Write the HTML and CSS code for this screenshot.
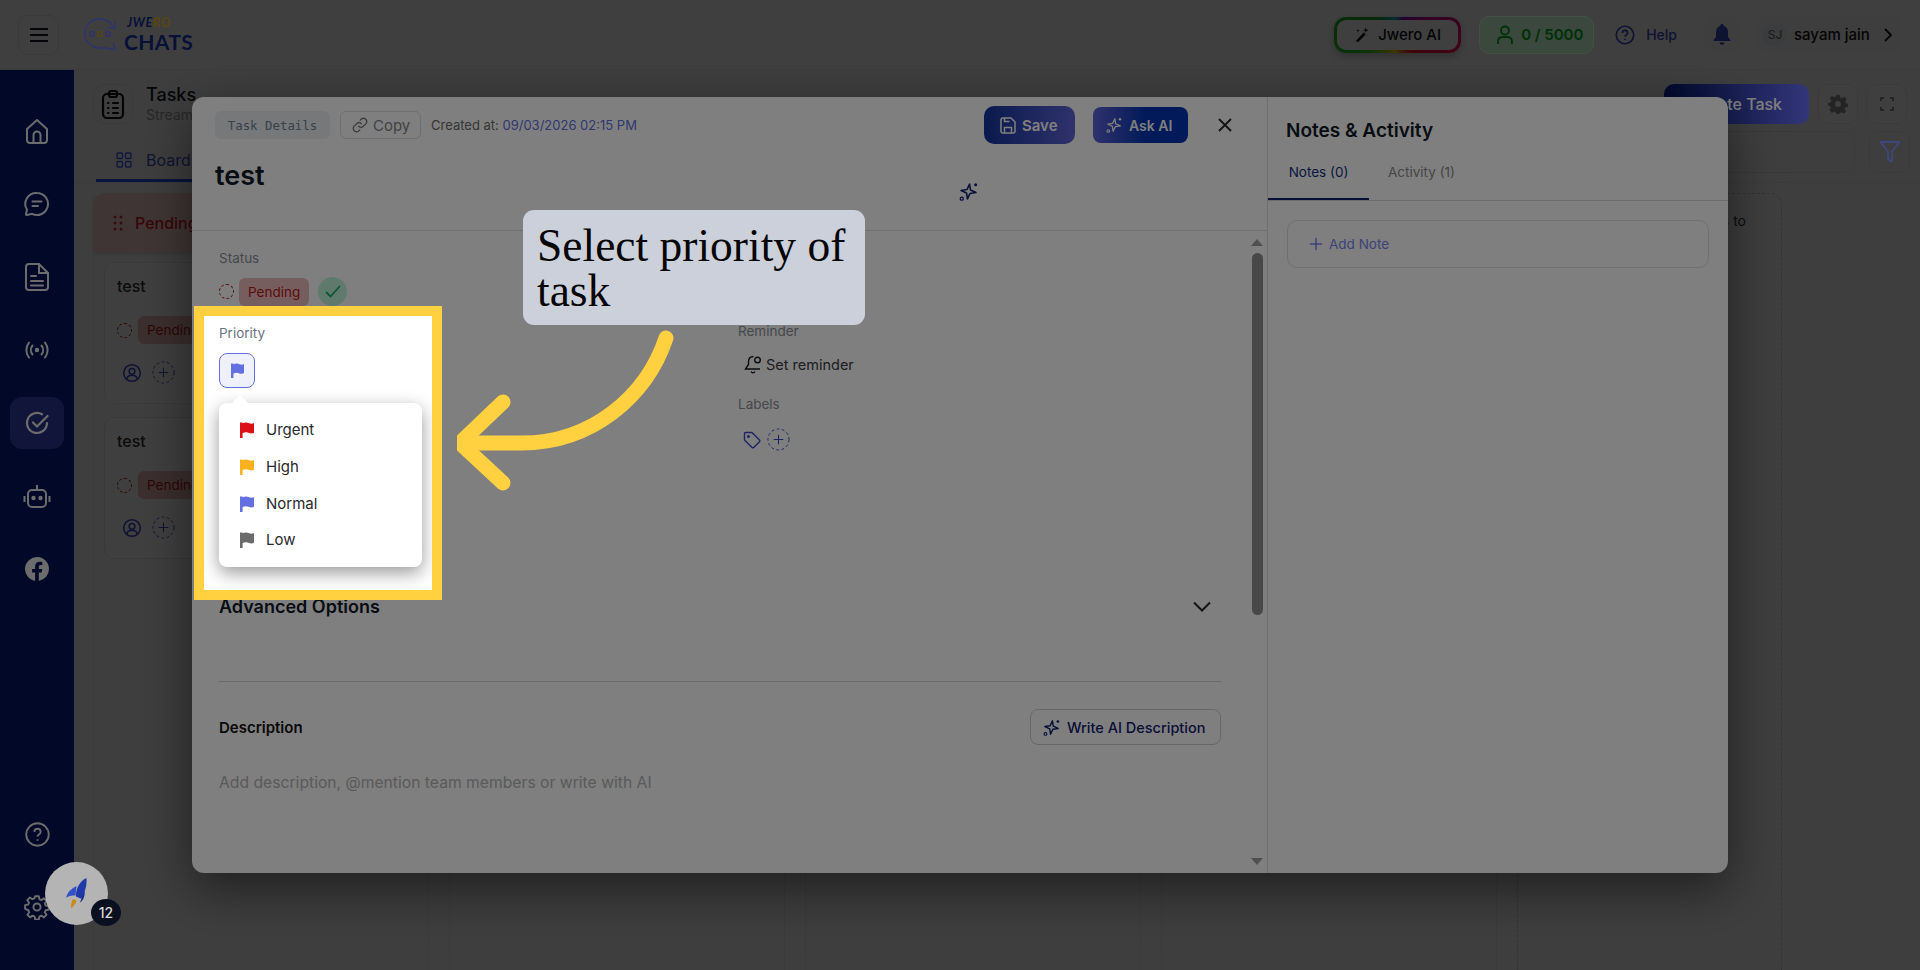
FILE: index.html
```html
<!DOCTYPE html>
<html lang="en">
<head>
    <meta charset="UTF-8">
    <meta name="viewport" content="width=device-width, initial-scale=1.0">
    <title>Jwero Chats - Tasks</title>
    <link rel="stylesheet" href="styles.css">
</head>
<body>
    <svg class="sprite" aria-hidden="true">
        <symbol id="i-flag" viewBox="0 0 14 16"><path fill="currentColor" d="M0 .5h2.600v.8c3-1.300 5-.6 6.500 0 2 .7 3.400.6 4.900-.3v9.800c-1.500.9-2.900 1-4.900.3-1.500-.6-3.500-1.300-6.500 0V16H0z"/></symbol>
        <symbol id="i-sparkle" viewBox="0 0 24 24"><path fill="none" stroke="currentColor" stroke-width="2" stroke-linejoin="round" d="M12 2.500l2.200 7.300 7.300 2.200-7.300 2.200L12 21.500l-2.200-7.300L2.500 12l7.300-2.200z" transform="rotate(8 12 12)"/><circle cx="21" cy="3.500" r="1.900" fill="currentColor"/><circle cx="3.500" cy="21" r="2" fill="none" stroke="currentColor" stroke-width="1.600"/></symbol>
        <symbol id="i-user" viewBox="0 0 24 24"><g fill="none" stroke="currentColor" stroke-width="1.800"><circle cx="12" cy="12" r="10"/><circle cx="12" cy="10" r="3.500"/><path d="M5.500 19c1-3 3.500-4.200 6.500-4.200s5.500 1.200 6.500 4.200"/></g></symbol>
        <symbol id="i-add" viewBox="0 0 24 24"><circle cx="12" cy="12" r="11" fill="none" stroke="currentColor" stroke-width="1" stroke-dasharray="3 2.500"/><path d="M12 7v10M7 12h10" stroke="currentColor" stroke-width="1.100"/></symbol>
    </svg>

    <div class="app">
        <header class="topbar">
            <button class="menu-btn">
                <svg width="20" height="16" viewBox="0 0 20 16"><path d="M1 2h18M1 8h18M1 14h18" stroke="#111827" stroke-width="2"/></svg>
            </button>
            <div class="logo">
                <svg width="36" height="36" viewBox="0 0 36 36" fill="none" stroke="#5a64e0" stroke-width="1.300">
                    <path d="M30 10C27 4 22 2 17 2 8 2 2 8 2 17c0 8 7 14 15 14h6l9 2-2-7"/>
                    <path d="M32 4v7h-7"/>
                    <circle cx="9" cy="17" r="2.400"/>
                    <circle cx="17" cy="17" r="2.400" stroke="#b08a20"/>
                    <circle cx="25" cy="17" r="2.400"/>
                </svg>
                <div class="logo-text">
                    <span class="logo-top">JWE<em>RO</em></span>
                    <span class="logo-main">CHATS</span>
                </div>
            </div>
            <div class="topbar-right">
                <button class="ai-btn">
                    <svg width="17" height="17" viewBox="0 0 24 24"><path d="M4 21L15 9l3 3L7 23z" fill="#111"/><path d="M18 2l1 3 3 1-3 1-1 3-1-3-3-1 3-1zM7 4l.6 2 2 .6-2 .6L7 9l-.6-1.800-2-.6 2-.6z" fill="#111"/></svg>
                    Jwero AI
                </button>
                <div class="credits">
                    <svg width="18" height="20" viewBox="0 0 18 20" fill="none" stroke="#00600f" stroke-width="1.800"><circle cx="9" cy="5.500" r="4"/><path d="M2 19v-2c0-3 2-5 5-5h4c3 0 5 2 5 5v2"/></svg>
                    0 / 5000
                </div>
                <div class="help">
                    <svg width="20" height="20" viewBox="0 0 24 24" fill="none" stroke="#3a4cc8" stroke-width="2"><circle cx="12" cy="12" r="10.500"/><path d="M9 9.500C9 7.500 10.500 6.500 12 6.500s3 1 3 3c0 2.500-3 2.500-3 4.500M12 16.500v1.500"/></svg>
                    Help
                </div>
                <button class="bell-btn">
                    <svg width="18" height="22" viewBox="0 0 18 22"><path fill="#3a4cc8" d="M9 0a1.500 1.500 0 0 1 1.500 1.700C13.500 2.500 15 5 15 8v5l2.500 3v1H.5v-1L3 13V8c0-3 1.500-5.500 4.500-6.300A1.500 1.500 0 0 1 9 0zM6.500 18.500h5a2.500 2.500 0 0 1-5 0z"/></svg>
                </button>
                <div class="user-pill">
                    <span class="avatar">SJ</span>
                    <span class="user-name">sayam jain</span>
                    <svg width="10" height="14" viewBox="0 0 10 14" fill="none" stroke="#111" stroke-width="1.800"><path d="M2 1l6 6-6 6"/></svg>
                </div>
            </div>
        </header>

        <div class="main">
            <nav class="sidebar">
                <a class="side-item"><svg width="24" height="26" viewBox="0 0 24 26" fill="none" stroke="currentColor" stroke-width="2" stroke-linejoin="round"><path d="M2 11l10-9 10 9v11a3 3 0 0 1-3 3H5a3 3 0 0 1-3-3z"/><path d="M8.500 25v-8a3.500 3.500 0 0 1 7 0v8"/></svg></a>
                <a class="side-item"><svg width="26" height="26" viewBox="0 0 26 26" fill="none" stroke="currentColor" stroke-width="2" stroke-linecap="round"><path d="M13 2a11 11 0 1 1-5 20.800L3 24c-1 .2-1.200-.5-1-1.200l1-4A11 11 0 0 1 13 2z"/><path d="M8.500 10.500h9M8.500 15h5.500"/></svg></a>
                <a class="side-item"><svg width="24" height="28" viewBox="0 0 24 28" fill="none" stroke="currentColor" stroke-width="2" stroke-linecap="round"><path d="M14 1H4a3 3 0 0 0-3 3v20a3 3 0 0 0 3 3h16a3 3 0 0 0 3-3V10z"/><path d="M14 1v9h9M6 13h5M6 18h12M6 22.500h12"/></svg></a>
                <a class="side-item"><svg width="24" height="18" viewBox="0 0 24 18" fill="none" stroke="currentColor" stroke-width="2" stroke-linecap="round"><circle cx="12" cy="9" r="1.200" fill="currentColor"/><path d="M7.500 4.500a7 7 0 0 0 0 9M16.500 4.500a7 7 0 0 1 0 9M4 1.500a12 12 0 0 0 0 15M20 1.500a12 12 0 0 1 0 15"/></svg></a>
                <a class="side-item active"><svg width="24" height="24" viewBox="0 0 24 24" fill="none" stroke="currentColor" stroke-width="2.200" stroke-linecap="round"><path d="M22 12a10 10 0 1 1-5-8.700"/><path d="M8 11.500l4 4L22.500 5"/></svg></a>
                <a class="side-item"><svg width="28" height="24" viewBox="0 0 28 24" fill="none" stroke="currentColor" stroke-width="2"><rect x="5" y="6" width="18" height="17" rx="4"/><path d="M14 1v5M1.500 12v6M26.500 12v6"/><circle cx="10.500" cy="14" r="1.200" fill="currentColor"/><circle cx="17.500" cy="14" r="1.200" fill="currentColor"/></svg></a>
                <a class="side-item"><svg width="24" height="24" viewBox="0 0 24 24"><path fill="currentColor" d="M24 12a12 12 0 1 0-13.900 11.900v-8.400H7.100V12h3V9.400c0-3 1.800-4.700 4.500-4.700 1.300 0 2.700.2 2.700.2v3h-1.500c-1.500 0-2 .9-2 1.900V12h3.400l-.5 3.500h-2.900v8.400A12 12 0 0 0 24 12z"/></svg></a>
                <a class="side-item side-bottom"><svg width="25" height="25" viewBox="0 0 24 24" fill="none" stroke="currentColor" stroke-width="1.800"><circle cx="12" cy="12" r="10.800"/><path d="M9 9.500C9 7.500 10.500 6.500 12 6.500s3 1 3 3c0 2.500-3 2.500-3 4.500M12 16.500v1.500"/></svg></a>
                <a class="side-item"><svg width="26" height="26" viewBox="0 0 24 24" fill="none" stroke="currentColor" stroke-width="1.800" stroke-linejoin="round"><circle cx="12" cy="12" r="3.300"/><path d="M10.300 2h3.400l.5 2.800 1.800.8 2.400-1.600 2.400 2.400-1.600 2.400.8 1.800 2.800.5v3.400l-2.800.5-.8 1.800 1.600 2.400-2.400 2.400-2.400-1.600-1.800.8-.5 2.800h-3.400l-.5-2.800-1.800-.8-2.400 1.600-2.400-2.400 1.600-2.400-.8-1.800L1 13.700v-3.400l2.800-.5.8-1.800L3 5.600l2.400-2.400 2.400 1.600 1.800-.8z"/></svg></a>
            </nav>

            <section class="content">
                <div class="page-head">
                    <div class="page-icon">
                        <svg width="24" height="30" viewBox="0 0 24 30" fill="none" stroke="#111" stroke-width="2.200" stroke-linecap="round"><rect x="2" y="5" width="20" height="24" rx="4"/><rect x="8" y="2" width="8" height="6" rx="2"/><path d="M7 14h.5M12 14h5M7 19h.5M12 19h5M7 24h.5M12 24h5"/></svg>
                    </div>
                    <div class="page-title">
                        <div class="title-main">Tasks</div>
                        <div class="title-sub">Stream</div>
                    </div>
                    <div class="head-actions">
                        <button class="create-btn">Create Task</button>
                        <button class="square-btn">
                            <svg width="20" height="20" viewBox="0 0 24 24"><path fill="#909090" d="M10 1h4l.6 3 2.300 1 2.600-1.700 2.800 2.800L20.600 8.700l1 2.300 2.400.6v4l-3 .4-1 2.300 1.700 2.600-2.800 2.800-2.600-1.700-2.300 1-.4 2H10l-.6-3-2.300-1-2.600 1.700L1.700 19l1.700-2.600-1-2.300-2.400-.4v-3l3-.6 1-2.300L1.700 5.100l2.800-2.800 2.600 1.700 2.300-1zM12 8.500a3.500 3.500 0 1 0 0 7 3.500 3.500 0 0 0 0-7z"/></svg>
                        </button>
                        <button class="square-btn">
                            <svg width="14" height="14" viewBox="0 0 14 14" fill="none" stroke="#909090" stroke-width="2"><path d="M1 4V1h3M10 1h3v3M13 10v3h-3M4 13H1v-3"/></svg>
                        </button>
                    </div>
                </div>
                <div class="tabs-row">
                    <div class="board-tab">
                        <svg width="16" height="16" viewBox="0 0 16 16" fill="none" stroke="#1e2c80" stroke-width="1.400"><rect x="1" y="1" width="5.500" height="5.500" rx="1"/><rect x="9.500" y="1" width="5.500" height="5.500" rx="1"/><rect x="1" y="9.500" width="5.500" height="5.500" rx="1"/><rect x="9.500" y="9.500" width="5.500" height="5.500" rx="1"/></svg>
                        Boards
                    </div>
                    <div class="search-box"></div>
                    <button class="filter-btn">
                        <svg width="22" height="24" viewBox="0 0 22 24" fill="none" stroke="#7c8cff" stroke-width="1.800" stroke-linejoin="round"><path d="M1.500 2h19l-7.500 9.500V22l-4-3v-7.500z"/></svg>
                    </button>
                </div>
                <div class="board">
                    <div class="board-col">
                        <div class="col-head">
                            <svg width="10" height="16" viewBox="0 0 10 16" fill="#d23030"><circle cx="2" cy="2" r="1.500"/><circle cx="8" cy="2" r="1.500"/><circle cx="2" cy="8" r="1.500"/><circle cx="8" cy="8" r="1.500"/><circle cx="2" cy="14" r="1.500"/><circle cx="8" cy="14" r="1.500"/></svg>
                            Pending
                        </div>
                        <div class="task-card">
                            <div class="card-title">test</div>
                            <div class="card-status"><span class="dash-circle"></span><span class="pending-chip">Pending</span></div>
                            <div class="card-people">
                                <svg class="ic-blue" width="20" height="20"><use href="#i-user"/></svg>
                                <svg class="ic-blue" width="23" height="23"><use href="#i-add"/></svg>
                            </div>
                        </div>
                        <div class="task-card">
                            <div class="card-title">test</div>
                            <div class="card-status"><span class="dash-circle"></span><span class="pending-chip">Pending</span></div>
                            <div class="card-people">
                                <svg class="ic-blue" width="20" height="20"><use href="#i-user"/></svg>
                                <svg class="ic-blue" width="23" height="23"><use href="#i-add"/></svg>
                            </div>
                        </div>
                    </div>
                    <div class="board-col"></div>
                    <div class="board-col"></div>
                    <div class="board-col"></div>
                    <div class="board-new">Add a new status to</div>
                </div>
            </section>
        </div>
    </div>

    <div class="backdrop"></div>

    <div class="modal">
        <div class="task-pane">
            <div class="pane-head">
                <div class="pane-toolbar">
                    <span class="chip-mono">Task Details</span>
                    <button class="copy-btn">
                        <svg width="16" height="16" viewBox="0 0 24 24" fill="none" stroke="#7c7c7c" stroke-width="2" stroke-linecap="round"><path d="M10 14a5 5 0 0 0 7 0l4-4a5 5 0 0 0-7-7l-1.500 1.500"/><path d="M14 10a5 5 0 0 0-7 0l-4 4a5 5 0 0 0 7 7l1.500-1.500"/></svg>
                        Copy
                    </button>
                    <span class="created">Created at: <b>09/03/2026 02:15 PM</b></span>
                    <button class="save-btn">
                        <svg width="16" height="17" viewBox="0 0 16 17" fill="none" stroke="currentColor" stroke-width="1.500"><path d="M1 3a2 2 0 0 1 2-2h8l4 4v9a2 2 0 0 1-2 2H3a2 2 0 0 1-2-2z"/><path d="M4.500 16v-5.500h7V16M4.500 1v3.500h5"/></svg>
                        Save
                    </button>
                    <button class="ask-btn">
                        <svg width="16" height="16"><use href="#i-sparkle"/></svg>
                        Ask AI
                    </button>
                    <button class="close-btn">
                        <svg width="14" height="14" viewBox="0 0 14 14" stroke="#2b2b2b" stroke-width="2"><path d="M1 1l12 12M13 1L1 13"/></svg>
                    </button>
                </div>
                <div class="title-row">
                    <h1 class="task-title">test</h1>
                    <svg class="ic-navy" width="19" height="19"><use href="#i-sparkle"/></svg>
                </div>
            </div>
            <div class="pane-body">
                <div class="form">
                    <div class="fields">
                        <div class="field-col">
                            <div class="field-label">Status</div>
                            <div class="status-row">
                                <span class="dash-circle"></span>
                                <span class="pending-chip">Pending</span>
                                <span class="check-circle">
                                    <svg width="16" height="13" viewBox="0 0 16 13" fill="none" stroke="#1aa86e" stroke-width="1.800"><path d="M1 7l4.500 4.500L15 1"/></svg>
                                </span>
                            </div>
                        </div>
                        <div class="field-col field-col-right">
                            <div class="field-label">Reminder</div>
                            <div class="reminder-row">
                                <svg width="18" height="20" viewBox="0 0 18 20" fill="none" stroke="#1a1a1a" stroke-width="1.400"><path d="M9.500 2.500C6 2.500 4.500 5 4.500 8v2.500L1.500 15h14.500"/><path d="M7 17.500a2.200 2.200 0 0 0 4 0"/><circle cx="13.500" cy="6" r="2.800"/></svg>
                                Set reminder
                            </div>
                            <div class="field-label labels-label">Labels</div>
                            <div class="labels-row">
                                <svg class="ic-blue" width="18" height="18" viewBox="0 0 18 18" fill="none" stroke="currentColor" stroke-width="1.400" stroke-linejoin="round"><path d="M1.500 2.500a1 1 0 0 1 1-1H9l7.500 7.500a1.200 1.200 0 0 1 0 1.700L10.700 16.500a1.200 1.200 0 0 1-1.700 0L1.500 9z"/><circle cx="5.500" cy="5.500" r=".8" fill="currentColor"/></svg>
                                <svg class="ic-blue" width="23" height="23"><use href="#i-add"/></svg>
                            </div>
                        </div>
                    </div>
                    <div class="advanced-row">
                        <span>Advanced Options</span>
                        <svg width="18" height="11" viewBox="0 0 18 11" fill="none" stroke="#2b2b2b" stroke-width="2"><path d="M1 1.500l8 8 8-8"/></svg>
                    </div>
                    <div class="form-divider"></div>
                    <div class="desc-row">
                        <span class="desc-label">Description</span>
                        <button class="write-btn">
                            <svg width="17" height="17"><use href="#i-sparkle"/></svg>
                            Write AI Description
                        </button>
                    </div>
                    <div class="desc-placeholder">Add description, @mention team members or write with AI</div>
                </div>
                <div class="scrollbar">
                    <span class="scroll-up"></span>
                    <span class="scroll-thumb"></span>
                    <span class="scroll-down"></span>
                </div>
            </div>
        </div>
        <aside class="notes-pane">
            <h2 class="notes-title">Notes &amp; Activity</h2>
            <div class="notes-tabs">
                <span class="notes-tab active">Notes (0)</span>
                <span class="notes-tab">Activity (1)</span>
            </div>
            <div class="add-note">
                <svg width="14" height="14" viewBox="0 0 14 14" stroke="#7886ee" stroke-width="1.500"><path d="M7 1v12M1 7h12"/></svg>
                Add Note
            </div>
        </aside>
    </div>

    <div class="tour-dim"></div>

    <div class="tour-frame">
        <div class="field-label priority-label">Priority</div>
        <button class="priority-btn">
            <svg width="13" height="15"><use href="#i-flag"/></svg>
        </button>
        <div class="priority-menu">
            <div class="priority-item"><svg class="flag-red" width="14" height="16"><use href="#i-flag"/></svg>Urgent</div>
            <div class="priority-item"><svg class="flag-amber" width="14" height="16"><use href="#i-flag"/></svg>High</div>
            <div class="priority-item"><svg class="flag-blue" width="14" height="16"><use href="#i-flag"/></svg>Normal</div>
            <div class="priority-item"><svg class="flag-grey" width="14" height="16"><use href="#i-flag"/></svg>Low</div>
        </div>
    </div>

    <div class="tour-callout">Select priority of task</div>

    <svg class="tour-arrow" width="240" height="180" viewBox="0 0 240 180" fill="none" stroke="#ffd040" stroke-width="15" stroke-linecap="round" stroke-linejoin="round">
        <path d="M209 18C190 75 135 125 60 123H12"/>
        <path d="M46 82L3 123l43 40"/>
    </svg>

    <div class="launcher">
        <svg width="21" height="31" viewBox="0 0 20 30">
            <path fill="#c98a16" d="M6 21c1.500-.5 3.500 0 4 1-.5 3-3 5-5 7.500-.5-3 0-6 1-8.500z"/>
            <path fill="#3450c8" d="M10 8C5 10 1 14 0 19c3-2 6-2.500 9-2z"/>
            <path fill="#14288a" d="M15 15c.5 3 0 6-2 9 3-2 5-5 5-11z"/>
            <path fill="#1d3aa8" d="M19.500 0c1 6-1 14-5 20l-5-2C9 11 13 3 19.500 0z"/>
        </svg>
        <span class="launcher-badge">12</span>
    </div>
</body>
</html>
```

FILE: styles.css
```css
* {
    margin: 0;
    padding: 0;
    box-sizing: border-box;
}

body {
    position: relative;
    height: 100vh;
    font-family: Inter, "Liberation Sans", sans-serif;
    background: #fff;
    color: #111827;
    overflow: hidden;
}

button {
    font-family: inherit;
    border: none;
    background: none;
}

.sprite {
    position: absolute;
    width: 0;
    height: 0;
}

.ic-blue { color: #3a46c8; }
.ic-navy { color: #12206e; }

.app {
    display: flex;
    flex-direction: column;
    height: 100%;
}

/* top bar */
.topbar {
    display: flex;
    align-items: center;
    height: 70px;
    padding: 0 18px;
    background: #fff;
    border-bottom: 1px solid #f0f0f0;
}

.menu-btn {
    display: flex;
    align-items: center;
    justify-content: center;
    width: 41px;
    height: 40px;
    border: 1px solid #e8e8e8;
    border-radius: 10px;
}

.logo {
    position: relative;
    z-index: 5;
    display: flex;
    align-items: center;
    gap: 5px;
    margin-left: 24px;
}

.logo-text {
    display: flex;
    flex-direction: column;
    font-family: Lato, sans-serif;
    line-height: 1;
    color: #0f2270;
}

.logo-top {
    margin-left: 3px;
    font-size: 12.5px;
    font-weight: 700;
    font-style: italic;
    letter-spacing: .6px;
}

.logo-top em { color: #b08a20; }

.logo-main {
    margin-top: 1px;
    font-size: 21px;
    font-weight: 700;
    letter-spacing: .4px;
}

.topbar-right {
    display: flex;
    align-items: center;
    margin-left: auto;
}

.ai-btn {
    display: flex;
    align-items: center;
    gap: 8px;
    width: 127px;
    height: 36px;
    padding-left: 16px;
    border: 3px solid transparent;
    border-radius: 12px;
    background: linear-gradient(#fff, #fff) padding-box,
        conic-gradient(from 20deg, #7a0bd0, #ff0a6c 70deg, #ff1a1a 120deg, #ffe000 170deg, #1fd000 230deg, #1fa030 290deg, #00c0c0 330deg, #7a0bd0) border-box;
    box-shadow: 0 3px 8px rgba(0, 0, 0, .25);
    font-size: 15px;
    font-weight: 500;
    color: #111;
}

.credits {
    position: relative;
    z-index: 5;
    display: flex;
    align-items: center;
    gap: 7px;
    width: 115px;
    height: 38px;
    margin-left: 18px;
    padding-left: 16px;
    border: 1px solid #86a08a;
    border-radius: 10px;
    background: #74907a;
    font-size: 15px;
    font-weight: 600;
    color: #00600f;
}

.help {
    display: flex;
    align-items: center;
    gap: 11px;
    margin-left: 21px;
    font-size: 14px;
    font-weight: 500;
    color: #3a4cc8;
}

.bell-btn {
    display: flex;
    align-items: center;
    justify-content: center;
    width: 34px;
    height: 38px;
    margin-left: 28px;
    border-radius: 10px;
    background: #f8f8f8;
}

.user-pill {
    display: flex;
    align-items: center;
    width: 145px;
    height: 38px;
    margin-left: 18px;
    padding-left: 6px;
    border-radius: 12px;
    background: #f8f8f8;
}

.avatar {
    display: flex;
    align-items: center;
    justify-content: center;
    width: 24px;
    height: 24px;
    border-radius: 50%;
    background: #eef0f6;
    font-size: 12px;
    color: #666;
}

.user-name {
    margin-left: 7px;
    font-size: 15px;
    font-weight: 500;
    color: #111;
}

.user-pill svg { margin-left: 13px; }

/* sidebar, sits above the modal backdrop */
.main {
    display: flex;
    flex: 1;
    min-height: 0;
}

.sidebar {
    position: relative;
    z-index: 5;
    display: flex;
    flex-direction: column;
    align-items: center;
    gap: 21px;
    width: 74px;
    padding: 35px 0 37px;
    background: #021050;
}

.side-item {
    display: flex;
    align-items: center;
    justify-content: center;
    width: 54px;
    height: 52px;
    border-radius: 12px;
    color: #d8d8d8;
}

.side-item.active { background: #252b74; }
.side-bottom { margin-top: auto; }

/* tasks page behind the modal */
.content {
    flex: 1;
    min-width: 0;
    display: flex;
    flex-direction: column;
    background: #fafafa;
}

.page-head {
    display: flex;
    align-items: center;
    padding: 14px 13px 0 19px;
}

.page-icon {
    display: flex;
    align-items: center;
    justify-content: center;
    width: 40px;
    height: 40px;
    border: 1px solid #e8e8e8;
    border-radius: 10px;
}

.page-title {
    margin-top: -1px;
    margin-left: 13px;
}

.title-main {
    font-size: 18px;
    font-weight: 500;
    line-height: 22px;
}

.title-sub {
    font-size: 14px;
    line-height: 18px;
    color: #a0a0a0;
}

.head-actions {
    display: flex;
    gap: 9px;
    margin-left: auto;
}

.create-btn {
    position: relative;
    z-index: 5;
    width: 145px;
    height: 40px;
    border-radius: 10px;
    background: linear-gradient(90deg, #00145a, #666cf4);
    font-size: 16px;
    font-weight: 500;
    color: #fff;
}

.square-btn {
    display: flex;
    align-items: center;
    justify-content: center;
    width: 40px;
    height: 40px;
    border: 1px solid #e8e8e8;
    border-radius: 10px;
    background: #fff;
}

.tabs-row {
    display: flex;
    align-items: flex-end;
    height: 59px;
    padding-right: 10px;
    border-bottom: 1px solid #ececec;
}

.board-tab {
    position: relative;
    z-index: 5;
    display: flex;
    align-items: center;
    gap: 14px;
    width: 240px;
    height: 43px;
    margin-left: 22px;
    padding: 2px 20px 0;
    border-bottom: 3px solid #14287c;
    font-size: 16px;
    color: #1e2864;
}

.search-box {
    width: 400px;
    height: 42px;
    margin: 0 14px 9px auto;
    border: 1px solid #e8e8e8;
    border-radius: 10px;
}

.filter-btn {
    display: flex;
    align-items: center;
    justify-content: center;
    width: 41px;
    height: 42px;
    margin-bottom: 9px;
    border: 1px solid #e8e8e8;
    border-radius: 10px;
}

.filter-btn svg {
    position: relative;
    z-index: 5;
}

.board {
    display: flex;
    flex: 1;
    gap: 20px;
    padding: 10px 0 0 19px;
}

.board-col {
    flex: 0 0 336px;
    border-left: 1px solid #ececec;
    border-right: 1px solid #ececec;
}

.col-head {
    display: flex;
    align-items: center;
    gap: 12px;
    height: 59px;
    padding-left: 19px;
    border-radius: 10px 10px 0 0;
    background: #ffd6d6;
    box-shadow: 0 2px 4px rgba(0, 0, 0, .15);
    font-size: 16px;
    font-weight: 500;
    color: #e01b1b;
}

.task-card {
    width: 315px;
    height: 142px;
    margin: 10px 0 13px 10px;
    padding: 13px 12px;
    border: 1px solid #e8e8e8;
    border-radius: 10px;
    background: #fff;
}

.card-title {
    font-size: 16px;
    font-weight: 500;
    color: #333;
}

.card-status {
    display: flex;
    align-items: center;
    gap: 6px;
    margin-top: 20px;
}

.card-people {
    display: flex;
    align-items: center;
    gap: 10px;
    margin-top: 17px;
    padding-left: 5px;
}

.board-new {
    flex: 0 0 265px;
    padding: 18px 35px 0 0;
    border: 1px dashed #cfcfcf;
    border-bottom: 0;
    border-radius: 10px 10px 0 0;
    font-size: 14px;
    line-height: 18px;
    color: #333;
    text-align: right;
    white-space: nowrap;
}

/* layers */
.backdrop {
    position: absolute;
    inset: 0;
    z-index: 3;
    background: rgba(0, 0, 0, .5);
}

.tour-dim {
    position: absolute;
    inset: 0;
    z-index: 30;
    background: rgba(0, 0, 0, .5);
}

/* modal */
.modal {
    position: absolute;
    top: 97px;
    left: 192px;
    z-index: 10;
    display: flex;
    width: 1536px;
    height: 776px;
    border-radius: 12px;
    background: #fff;
    box-shadow: 0 16px 50px rgba(0, 0, 0, .5);
}

.task-pane {
    display: flex;
    flex-direction: column;
    width: 1076px;
    border-right: 1px solid #dedede;
}

.pane-head {
    height: 134px;
    padding: 9px 0 0 23px;
    border-bottom: 1px solid #dedede;
}

.pane-toolbar {
    display: flex;
    align-items: center;
    height: 38px;
}

.chip-mono {
    display: flex;
    align-items: center;
    justify-content: center;
    width: 115px;
    height: 28px;
    border-radius: 6px;
    background: #eef1f4;
    font-family: "DejaVu Sans Mono", monospace;
    font-size: 12.4px;
    color: #6f8396;
}

.copy-btn {
    display: flex;
    align-items: center;
    gap: 5px;
    width: 81px;
    height: 28px;
    margin-left: 10px;
    padding-left: 11px;
    border: 1px solid #dcdcdc;
    border-radius: 6px;
    font-size: 15px;
    color: #858585;
}

.created {
    margin-left: 10px;
    font-size: 13px;
    color: #6c6c6c;
}

.created b {
    font-weight: 400;
    color: #6070e0;
}

.save-btn {
    display: flex;
    align-items: center;
    gap: 6px;
    width: 91px;
    height: 38px;
    margin-left: auto;
    padding-left: 16px;
    border-radius: 10px;
    background: linear-gradient(90deg, #14349a, #6064d8);
    font-size: 15px;
    font-weight: 600;
    color: #fff;
}

.ask-btn {
    display: flex;
    align-items: center;
    gap: 7px;
    width: 95px;
    height: 36px;
    margin-left: 18px;
    padding-left: 13px;
    border-radius: 8px;
    background: linear-gradient(90deg, #6064d8, #0434b4 55%);
    font-size: 14px;
    font-weight: 600;
    color: #fff;
}

.close-btn {
    display: flex;
    align-items: center;
    justify-content: center;
    width: 14px;
    height: 14px;
    margin: 0 35px 0 30px;
}

.title-row {
    display: flex;
    align-items: flex-start;
    margin-top: 12px;
}

.task-title {
    width: 744px;
    font-size: 27px;
    font-weight: 600;
    line-height: 40px;
    color: #111827;
}

.title-row svg { margin-top: 26px; }

.pane-body {
    display: flex;
    flex: 1;
    min-height: 0;
}

.form {
    flex: 1;
    min-width: 0;
    padding: 0 29px 0 27px;
}

.fields {
    display: flex;
    height: 360px;
}

.field-col {
    flex: 0 0 519px;
    padding-top: 19px;
}

.field-col-right {
    flex: 1;
    padding-top: 92px;
}

.field-label {
    font-size: 13.5px;
    line-height: 16px;
    color: #8b8f9a;
}

.status-row {
    display: flex;
    align-items: center;
    height: 29px;
    margin-top: 11px;
}

.dash-circle {
    width: 15px;
    height: 15px;
    border: 1.5px dashed #b81414;
    border-radius: 50%;
}

.pending-chip {
    display: flex;
    align-items: center;
    height: 28px;
    padding: 0 9px;
    border-radius: 6px;
    background: #efbcbc;
    font-size: 13.5px;
    color: #b81414;
}

.status-row .pending-chip { margin-left: 5px; }

.check-circle {
    display: flex;
    align-items: center;
    justify-content: center;
    width: 29px;
    height: 29px;
    margin-left: 9px;
    border-radius: 50%;
    background: #bef5da;
}

.reminder-row {
    display: flex;
    align-items: center;
    gap: 4px;
    height: 20px;
    margin-top: 15px;
    padding-left: 6px;
    font-size: 14.5px;
    color: #3a3a44;
}

.labels-label { margin-top: 22px; }

.labels-row {
    display: flex;
    align-items: center;
    gap: 6px;
    margin-top: 16px;
    padding-left: 5px;
}

.advanced-row {
    display: flex;
    align-items: center;
    justify-content: space-between;
    height: 30px;
    padding-right: 10px;
    font-size: 18px;
    font-weight: 600;
    color: #111827;
}

.form-divider {
    height: 1px;
    margin-top: 60px;
    background: #d8d8d8;
}

.desc-row {
    display: flex;
    align-items: center;
    justify-content: space-between;
    margin-top: 27px;
}

.desc-label {
    font-size: 15px;
    font-weight: 600;
    color: #111;
}

.write-btn {
    display: flex;
    align-items: center;
    gap: 7px;
    width: 191px;
    height: 36px;
    padding-left: 12px;
    border: 1px solid #cfcfcf;
    border-radius: 8px;
    font-size: 14.5px;
    font-weight: 500;
    color: #12206e;
}

.desc-placeholder {
    margin-top: 28px;
    font-size: 15.7px;
    line-height: 20px;
    color: #b4b4b4;
}

.scrollbar {
    display: flex;
    flex-direction: column;
    align-items: center;
    flex: 0 0 14px;
    margin-right: 3px;
    padding: 8px 0;
}

.scroll-up {
    border: 6px solid transparent;
    border-top: 0;
    border-bottom: 7px solid #a0a0a0;
}

.scroll-down {
    margin-top: auto;
    border: 6px solid transparent;
    border-bottom: 0;
    border-top: 7px solid #a0a0a0;
}

.scroll-thumb {
    width: 11px;
    height: 362px;
    margin-top: 7px;
    border-radius: 6px;
    background: #909090;
}

/* notes */
.notes-pane {
    flex: 1;
    padding-top: 22px;
}

.notes-title {
    margin-left: 18px;
    font-size: 19px;
    font-weight: 600;
    line-height: 24px;
    color: #111827;
}

.notes-tabs {
    display: flex;
    height: 54px;
    margin-top: 4px;
    border-bottom: 1px solid #d8d8d8;
}

.notes-tab {
    display: flex;
    align-items: center;
    justify-content: center;
    width: 101px;
    height: 53px;
    margin-right: 2px;
    padding-bottom: 4px;
    font-size: 13.5px;
    color: #8c8c8c;
}

.notes-tab.active {
    padding-bottom: 2px;
    border-bottom: 2px solid #12206e;
    color: #12307e;
}

.add-note {
    display: flex;
    align-items: center;
    gap: 6px;
    height: 48px;
    margin: 19px 19px 0;
    padding-left: 21px;
    border: 1px solid #dedede;
    border-radius: 10px;
    font-size: 13.5px;
    color: #7886ee;
}

/* tour highlight */
.tour-frame {
    position: absolute;
    top: 306px;
    left: 194px;
    z-index: 40;
    width: 248px;
    height: 294px;
    padding: 9px 15px;
    border: 10px solid #ffd040;
    background: #fff;
    overflow: hidden;
}

.priority-label { color: #6b7280; }

.priority-btn {
    display: flex;
    align-items: center;
    justify-content: center;
    width: 36px;
    height: 35px;
    margin-top: 12px;
    border: 1px solid #6470e0;
    border-radius: 8px;
    background: #eef0fc;
    color: #6470e0;
}

.priority-menu {
    position: relative;
    width: 203px;
    height: 164px;
    margin-top: 15px;
    padding: 8px 0 0 21px;
    border-radius: 8px;
    background: #fff;
    box-shadow: 0 6px 18px rgba(0, 0, 0, .4);
}

.priority-menu::before {
    content: "";
    position: absolute;
    top: -8px;
    left: 13px;
    border: 8px solid transparent;
    border-top: 0;
    border-bottom-color: #fff;
}

.priority-item {
    display: flex;
    align-items: center;
    gap: 12px;
    height: 37px;
    font-size: 15px;
    color: #2a2a2a;
}

.priority-item:last-child { margin-top: -1px; }

.flag-red { color: #dd1018; }
.flag-amber { color: #fbb21e; }
.flag-blue { color: #6470e0; }
.flag-grey { color: #6b6b6b; }

.tour-callout {
    position: absolute;
    top: 210px;
    left: 523px;
    z-index: 40;
    width: 342px;
    height: 115px;
    padding: 13px 14px;
    border-radius: 11px;
    background: #ccd0da;
    font-family: "Liberation Serif", serif;
    font-size: 45.5px;
    line-height: 45px;
    color: #050505;
}

.tour-arrow {
    position: absolute;
    top: 320px;
    left: 457px;
    z-index: 40;
}

.launcher {
    position: absolute;
    top: 862px;
    left: 45px;
    z-index: 40;
    display: flex;
    align-items: center;
    justify-content: center;
    width: 63px;
    height: 63px;
    border-radius: 50%;
    background: #b4b4b4;
}

.launcher-badge {
    position: absolute;
    right: -13px;
    bottom: -1px;
    display: flex;
    align-items: center;
    justify-content: center;
    width: 30px;
    height: 27px;
    border-radius: 50%;
    background: #0b1020;
    font-size: 14px;
    font-weight: 500;
    color: #d8d8d8;
}
```
